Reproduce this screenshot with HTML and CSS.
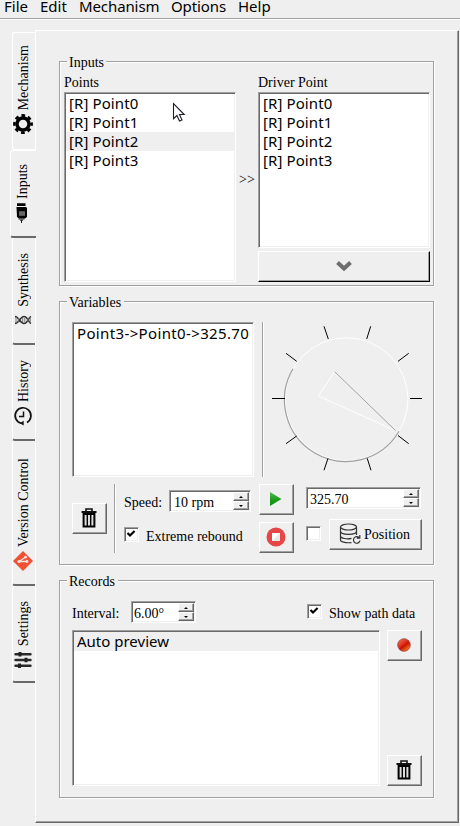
FILE: index.html
```html
<!DOCTYPE html>
<html lang="en">
<head>
<meta charset="utf-8">
<title>Mechanism</title>
<link rel="stylesheet" href="styles.css">
</head>
<body>
<svg class="defs" width="0" height="0">
  <symbol id="trash" viewBox="0 0 16 20">
    <path d="M5 3V1h6v2" fill="none" stroke="#111" stroke-width="1.6"/>
    <path d="M0.5 4h15M2 6.5h12" stroke="#111" stroke-width="2"/>
    <path d="M2.600 6v12.600h10.800V6z" fill="#ddd" stroke="#000" stroke-width="2"/>
    <path d="M6.300 7v11M9.700 7v11" stroke="#000" stroke-width="1.400"/>
  </symbol>
  <symbol id="check" viewBox="0 0 11 11">
    <path d="M1.500 4l2.500 2.600L8.600 2" fill="none" stroke="#000" stroke-width="2.100"/>
  </symbol>
</svg>
<nav class="menubar">
  <span class="m-file">File</span><span class="m-edit">Edit</span><span class="m-mech">Mechanism</span><span class="m-opt">Options</span><span>Help</span>
</nav>
<main class="main">
  <div class="tabs">
    <div class="tab t-mech"><span>Mechanism</span>
      <svg viewBox="0 0 20 20"><circle cx="10" cy="10" r="6" fill="none" stroke="#000" stroke-width="3.400"/><circle cx="10" cy="10" r="8.600" fill="none" stroke="#000" stroke-width="2.600" stroke-dasharray="3.700 3.054" stroke-dashoffset="1.850"/></svg>
    </div>
    <div class="tab active"><span>Inputs</span>
      <svg viewBox="0 0 20 20"><path d="M5 0.300h8.500v2.800H5zM4.500 4h9.500l1 1v9l-2 1.500H7L5 14z" fill="#000"/><path d="M8 8.200v4.600M10 8.200v4.600M12 8.200v4.600" stroke="#ccc" stroke-width="1"/><path d="M6.500 16h6M8 17.200h3M9.500 17v3" stroke="#222"/></svg>
    </div>
    <div class="tab t-syn"><span>Synthesis</span>
      <svg viewBox="0 0 20 20"><path d="M2 6.500c4 0 5 7 9 7s4-6 7-7M2 13.500c4 0 5-7 9-7s4 6 7 7" fill="none" stroke="#333" stroke-width="1.500"/><path d="M3 7v6M5.300 8v4M9.700 8v4M11.800 8v4M15 8v4M17.200 7v6" stroke="#777"/></svg>
    </div>
    <div class="tab t-his"><span>History</span>
      <svg viewBox="0 0 20 20"><path d="M8 17.300A7.900 7.900 0 1 1 14 16.500" fill="none" stroke="#111" stroke-width="1.700"/><path d="M10.700 14.800v4.600L6.800 17.200z" fill="#111"/><path d="M10.500 5.500v5H6" fill="none" stroke="#111" stroke-width="1.500"/></svg>
    </div>
    <div class="tab t-ver"><span>Version Control</span>
      <svg viewBox="0 0 20 20"><path d="M10 0l10 10-10 10L0 10z" fill="#f05133"/><path d="M4.500 10.500H14M6 10.500l6-4" stroke="#f5e4df" stroke-width="1.300"/><circle cx="14" cy="10.500" r="1.400" fill="#f5e4df"/><circle cx="12.500" cy="6.200" r="1.400" fill="#f5e4df"/><circle cx="6" cy="10.500" r="1.500" fill="#f5e4df"/></svg>
    </div>
    <div class="tab t-set"><span>Settings</span>
      <svg viewBox="0 0 20 20"><path d="M2.500 4.300h15M2.500 10h15M2.500 15.700h15" stroke="#2a2a2a" stroke-width="2.400" stroke-linecap="round"/><path d="M7 2v4.600M13 7.700v4.600M6.500 13.400V18" stroke="#222" stroke-width="3"/></svg>
    </div>
  </div>
  <section class="pane">
    <div class="group g-inputs">
      <div class="legend">Inputs</div>
      <div class="cols">
        <div class="col">
          <label>Points</label>
          <div class="list l-points"><div>[R] Point0</div><div>[R] Point1</div><div class="hover">[R] Point2</div><div>[R] Point3</div>
            <svg class="cursor" width="14" height="22" viewBox="0 0 14 22"><path d="M1.500 1.500v15.200l3.400-3.200 2.600 5.600 2.500-1.200-2.500-5.400h4.700z" fill="#fff" stroke="#1c1c2c" stroke-width="1.100"/></svg>
          </div>
        </div>
        <div class="arrows">&gt;&gt;</div>
        <div class="col">
          <label>Driver Point</label>
          <div class="list l-driver"><div>[R] Point0</div><div>[R] Point1</div><div>[R] Point2</div><div>[R] Point3</div></div>
          <div class="btn default"><svg width="16" height="12" viewBox="0 0 16 12"><path d="M1.500 2.500L8 8.500l6.500-6" fill="none" stroke="#6e6e6e" stroke-width="4"/></svg></div>
        </div>
      </div>
    </div>
    <div class="group g-vars">
      <div class="legend">Variables</div>
      <div class="row top">
        <div class="list l-vars"><div>Point3-&gt;Point0-&gt;325.70</div></div>
        <i class="sep s1"></i>
        <svg class="dial" viewBox="264 322 169 155">
          <circle cx="346.500" cy="399.300" r="61.500" fill="none" stroke="#fff"/>
          <path d="M293 368.800A61.500 61.500 0 0 0 399 431.300" fill="none" stroke="#a0a0a0" stroke-width="1.200"/>
          <path d="M334.700 371.700L318.300 396l77.400 34.700" fill="none" stroke="#fff"/>
          <path d="M334.700 371.700l61 59" stroke="#a4a4a4"/>
          <path d="M272 398.500h13M410 398.500h12M324 326.300l4.300 12.700M370.700 326.300l-4 12.700M286 353.300l10.700 8M398 361.300l10.700-8M286 443.700l10.700-7.700M398 435.500l10.700 8.200M324 470.300l4-12M371 470.300l-3.800-12" stroke="#000"/>
        </svg>
      </div>
      <div class="row bottom">
        <div class="btn b-trash"><svg width="16" height="20"><use href="#trash"/></svg></div>
        <i class="sep s2"></i>
        <div class="speed">
          <div class="row"><span class="lbl">Speed:</span><div class="spin sp-speed"><span>10 rpm</span><div class="steps"><b class="up"></b><b class="down"></b></div></div></div>
          <div class="row chk-row"><div class="chk"><svg width="11" height="11"><use href="#check"/></svg></div><span>Extreme rebound</span></div>
        </div>
        <div class="playcol">
          <div class="btn"><svg width="20" height="20" viewBox="0 0 20 20"><defs><linearGradient id="g" x1="0" y1="0" x2="0" y2="1"><stop offset="0" stop-color="#55ba55"/><stop offset=".55" stop-color="#209a20"/><stop offset="1" stop-color="#079307"/></linearGradient></defs><path d="M4 3L15.500 10 4 17z" fill="url(#g)"/></svg></div>
          <div class="btn"><svg width="20" height="20" viewBox="0 0 20 20"><circle cx="10" cy="10" r="9.500" fill="#e64646"/><path d="M6 6h8v8H6z" fill="#fff"/><path d="M14 6v8H6z" fill="#e8e8e8"/></svg></div>
        </div>
        <div class="poscol">
          <div class="spin sp-pos"><span>325.70</span><div class="steps"><b class="up"></b><b class="down"></b></div></div>
          <div class="row pos-row"><div class="chk"></div>
            <div class="btn b-pos"><svg width="22" height="22" viewBox="0 0 22 22" fill="none" stroke="#333" stroke-width="1.200"><ellipse cx="9.500" cy="4" rx="8" ry="3"/><path d="M1.500 4v13c0 1.800 4.500 3.200 11 2.600M17.500 4v8M1.500 8.300c0 4 16 4 16 0M1.500 12.700c0 3 7 3.600 11 2.600M20.200 14.700a3.300 3.300 0 1 0 .8 3M20.800 12v3.200h-3"/></svg><span>Position</span></div>
          </div>
        </div>
      </div>
    </div>
    <div class="group g-rec">
      <div class="legend">Records</div>
      <div class="row interval"><span class="lbl">Interval:</span><div class="spin sp-int"><span>6.00°</span><div class="steps"><b class="up"></b><b class="down"></b></div></div>
        <div class="chk"><svg width="11" height="11"><use href="#check"/></svg></div><span class="show">Show path data</span></div>
      <div class="row rec-row">
        <div class="list l-rec"><div class="hover">Auto preview</div></div>
        <div class="recbtns">
          <div class="btn"><svg width="14" height="14" viewBox="0 0 14 14"><defs><linearGradient id="r" x1="0.100" y1="0" x2=".9" y2="1"><stop offset="0" stop-color="#f47a62"/><stop offset=".48" stop-color="#d92410"/><stop offset=".52" stop-color="#c90c00"/><stop offset="1" stop-color="#ffa03c"/></linearGradient></defs><circle cx="7" cy="7" r="6.300" fill="url(#r)" stroke="#8c3a30" stroke-width=".7"/></svg></div>
          <div class="btn"><svg width="16" height="20"><use href="#trash"/></svg></div>
        </div>
      </div>
    </div>
  </section>
</main>
</body>
</html>
```
FILE: styles.css
```css
* { box-sizing: border-box; }
html, body { margin: 0; }
body {
  width: 460px;
  height: 826px;
  overflow: hidden;
  background: #efefef;
  color: #000;
  font: 14px/16px "Liberation Serif", "Times New Roman", serif;
  white-space: nowrap;
}
.defs { position: absolute; }
svg { display: block; flex: none; }
.row { display: flex; }

.menubar {
  display: flex;
  height: 20px;
  padding-left: 4px;
  border-bottom: 1px solid #fff;
  box-shadow: inset 0 -1px #a0a0a0;
  font: 15px/12px "Noto Sans", sans-serif;
}
.m-file { width: 36px; }
.m-edit { width: 39px; }
.m-mech { width: 92px; letter-spacing: -0.1px; }
.m-opt { width: 67px; letter-spacing: -0.1px; }

.main { display: flex; }
.tabs { width: 35px; padding: 12px 0 0 12px; }
.tab {
  display: flex;
  flex-direction: column;
  justify-content: flex-end;
  align-items: flex-start;
  gap: 4px;
  width: 23px;
  padding-bottom: 15px;
  padding-left: 0;
  border-left: 1px solid #fff;
  border-top: 1px solid #fff;
  border-bottom: 2px solid #696969;
  border-radius: 3px 0 0 3px;
}
.tab span {
  writing-mode: vertical-rl;
  transform: rotate(180deg);
  line-height: 16px;
  margin-left: 3px;
}
.tab svg { width: 20px; height: 20px; }
.t-mech { height: 118px; border-bottom: 1px solid #fff; }
.active {
  position: relative;
  z-index: 2;
  width: 26px;
  height: 88px;
  margin-left: -2px;
  padding-bottom: 13px;
  padding-left: 1px;
  background: #efefef;
}
.t-syn { height: 107px; padding-bottom: 13px; gap: 3px; border-top: 0; }
.t-his { height: 96px; padding-bottom: 13px; border-top: 0; }
.t-ver { height: 145px; padding-bottom: 13px; border-top: 0; }
.t-set { height: 97px; padding-bottom: 11px; border-top: 0; }

.pane {
  width: 424px;
  height: 793px;
  margin-top: 10px;
  padding: 30px 0 0 23px;
  border: 1px solid;
  border-color: #fff #696969 #696969 #fff;
  box-shadow: inset -1px -1px #a0a0a0;
}
.group {
  width: 375px;
  margin-bottom: 15px;
  border: 1px solid #a0a0a0;
  box-shadow: 1px 1px #fff, inset 1px 1px #fff;
  padding-left: 12px;
}
.g-inputs { height: 225px; padding-left: 4px; }
.g-vars { height: 264px; }
.g-rec { height: 218px; margin-bottom: 0; }
.legend {
  width: fit-content;
  height: 14px;
  line-height: 16px;
  margin: -7px 0 0 -5px;
  padding: 0 3px 0 2px;
  background: #efefef;
}
.g-inputs .legend { margin-left: 3px; padding-right: 2px; }

.list {
  border: 1px solid;
  border-color: #a0a0a0 #fff #fff #a0a0a0;
  box-shadow: inset 1px 1px #696969, inset -1px -1px #efefef;
  padding: 1px;
  background: #fff;
  font: 15px/19px "Noto Sans", sans-serif;
}
.list > div { height: 19px; padding-left: 3px; }
.hover { background: #efefef; background-clip: content-box; box-shadow: inset 3px 0 #efefef; }
.cols { display: flex; margin-top: 5px; }
.cols .list { letter-spacing: 0.1px; }
.col { width: 172px; }
.col label { display: block; height: 18px; line-height: 18px; }
.l-points { position: relative; height: 190px; }
.l-driver { height: 156px; margin-bottom: 3px; }
.cursor { position: absolute; left: 107px; top: 9px; }
.arrows { width: 22px; padding: 98px 0 0 3px; font-size: 14px; }

.btn {
  display: flex;
  align-items: center;
  justify-content: center;
  width: 35px;
  height: 31px;
  padding: 0 2px 2px 0;
  border: 1px solid;
  border-color: #fff #696969 #696969 #fff;
  box-shadow: inset -1px -1px #a0a0a0;
}
.btn.default {
  width: 172px;
  padding-right: 0;
  border-color: #fff #000 #000 #fff;
}

.top { margin-top: 13px; height: 155px; }
.l-vars { width: 182px; letter-spacing: 0.36px; }
.sep { width: 2px; background: linear-gradient(90deg, #a0a0a0 50%, #fff 50%); }
.s1 { margin-left: 8px; }
.dial { width: 169px; height: 155px; }
.bottom { margin-top: 7px; height: 69px; }
.b-trash { margin-top: 19px; }
.s2 { margin: 0 8px 0 7px; }
.speed { width: 135px; padding-top: 6px; }
.lbl { line-height: 26px; }
.speed .lbl { width: 45px; }
.chk-row { margin-top: 15px; }
.chk {
  width: 15px;
  height: 15px;
  padding: 1px;
  border: 1px solid;
  border-color: #a0a0a0 #fff #fff #a0a0a0;
  box-shadow: inset 1px 1px #696969, inset -1px -1px #efefef;
  background: #fff;
}
.speed .row { height: 22px; }
.chk-row span { margin-left: 7px; line-height: 20px; }
.playcol { display: flex; flex-direction: column; gap: 7px; width: 47px; }
.poscol { padding-top: 3px; }
.pos-row { margin-top: 10px; }
.pos-row .chk { margin-top: 7px; }
.b-pos { width: 93px; margin-left: 8px; gap: 3px; }
.b-pos span { padding-top: 3px; }

.spin {
  display: flex;
  justify-content: space-between;
  height: 22px;
  padding: 1px;
  border: 1px solid;
  border-color: #a0a0a0 #fff #fff #a0a0a0;
  box-shadow: inset 1px 1px #696969, inset -1px -1px #efefef;
  background: #fff;
  line-height: 21px;
}
.spin span { padding-left: 2px; }
.sp-speed { width: 82px; }
.sp-speed span { padding-left: 3px; }
.sp-pos { width: 115px; }
.sp-int { width: 65px; }
.sp-int span { padding-left: 1px; }
.steps { width: 16px; height: 18px; }
.steps b {
  display: flex;
  align-items: center;
  justify-content: center;
  height: 9px;
  background: #efefef;
  border: 1px solid;
  border-color: #fff #696969 #696969 #fff;
  box-shadow: inset -1px -1px #a0a0a0;
}
.steps b::after {
  content: "";
  border: solid transparent;
  border-width: 0 2px 2px;
  border-bottom-color: #000;
}
.steps .down::after { border-width: 2px 2px 0; border-top-color: #000; }

.interval { margin-top: 13px; height: 22px; }
.interval .lbl { width: 59px; }
.interval .chk { margin: 3px 7px 0 111px; }
.show { line-height: 26px; }
.rec-row { margin-top: 7px; }
.l-rec { width: 308px; height: 156px; }
.recbtns { display: flex; flex-direction: column; justify-content: space-between; margin-left: 7px; }
```
